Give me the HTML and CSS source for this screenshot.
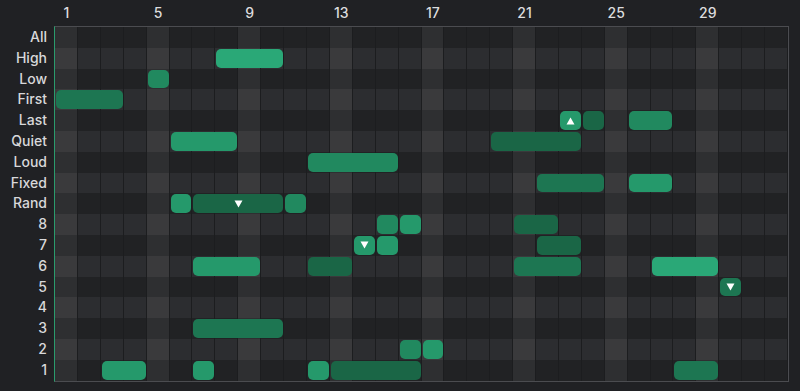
FILE: index.html
```html
<!DOCTYPE html>
<html lang="en">
<head>
    <title>Step Grid</title>
    <link rel="stylesheet" href="styles.css">
</head>
<body>
    <div class="editor">
        <div class="corner"></div>
        <div class="steps" id="steps"></div>
        <div class="lanes" id="lanes"></div>
        <div class="board">
            <div class="cells" id="cells"></div>
            <div class="notes" id="notes"></div>
        </div>
    </div>

    <script>
    const STEPS = 32;
    const lanes = ["All", "High", "Low", "First", "Last", "Quiet", "Loud", "Fixed", "Rand",
                   "8", "7", "6", "5", "4", "3", "2", "1"];

    // [row, first step, length, level 1-5, marker]
    const notes = [
        [1, 7, 3, 5],
        [2, 4, 1, 3],
        [3, 0, 3, 2],
        [4, 22, 1, 4, "up"], [4, 23, 1, 1], [4, 25, 2, 3],
        [5, 5, 3, 4], [5, 19, 4, 1],
        [6, 11, 4, 3],
        [7, 21, 3, 2], [7, 25, 2, 4],
        [8, 5, 1, 4], [8, 6, 4, 1, "down"], [8, 10, 1, 3],
        [9, 14, 1, 3], [9, 15, 1, 4], [9, 20, 2, 1],
        [10, 13, 1, 4, "down"], [10, 14, 1, 4], [10, 21, 2, 1],
        [11, 6, 3, 4], [11, 11, 2, 1], [11, 20, 3, 2], [11, 26, 3, 5],
        [12, 29, 1, 2, "down"],
        [14, 6, 4, 2],
        [15, 15, 1, 3], [15, 16, 1, 4],
        [16, 2, 2, 4], [16, 6, 1, 4], [16, 11, 1, 4], [16, 12, 4, 1], [16, 27, 2, 2]
    ];

    const markers = {
        up: '<svg width="9" height="8" viewBox="0 0 9 8"><path d="M4.5 0.5 L8.5 7.5 L0.5 7.5 Z" fill="#fff"/></svg>',
        down: '<svg width="9" height="8" viewBox="0 0 9 8"><path d="M0.5 0.5 L8.5 0.5 L4.5 7.5 Z" fill="#fff"/></svg>'
    };

    document.addEventListener("DOMContentLoaded", () => {
        const steps = document.getElementById("steps");
        for (let i = 0; i < STEPS; i++) {
            const s = document.createElement("span");
            s.className = "step";
            if (i % 4 === 0) s.textContent = i + 1;
            steps.appendChild(s);
        }

        const laneBox = document.getElementById("lanes");
        lanes.forEach(name => {
            const l = document.createElement("div");
            l.className = "lane";
            l.textContent = name;
            laneBox.appendChild(l);
        });

        const cells = document.getElementById("cells");
        for (let r = 0; r < lanes.length; r++) {
            for (let c = 0; c < STEPS; c++) {
                const cell = document.createElement("div");
                cell.className = "cell";
                if (r % 2 === 1) cell.classList.add("alt");
                if (c % 4 === 0) cell.classList.add("beat");
                cells.appendChild(cell);
            }
        }

        const board = document.getElementById("notes");
        notes.forEach(([row, col, len, level, marker]) => {
            const n = document.createElement("div");
            n.className = "note lvl-" + level;
            n.style.gridRow = row + 1;
            n.style.gridColumn = (col + 1) + " / span " + len;
            if (marker) n.innerHTML = markers[marker];
            board.appendChild(n);
        });
    });
    </script>
</body>
</html>
```

FILE: styles.css
```css
body { margin: 0; background: #202124; font-family: Inter, "Noto Sans", sans-serif; color: #d6d6d8; }
.editor {
    display: grid;
    grid-template-columns: 54px 735px;
    grid-template-rows: 26px auto;
}
.steps {
    display: grid;
    grid-template-columns: repeat(32, 1fr);
    width: 733px;
    margin-left: 1px;
    align-items: center;
}
.step { text-align: center; font-size: 14px; font-weight: 500; line-height: 22px; color: #dcdcde; }
.lanes {
    display: grid;
    grid-template-rows: repeat(17, 1fr);
    height: 353.6px;
    margin-top: 1px;
    padding-right: 7px;
}
.lane { text-align: right; font-size: 14px; font-weight: 500; line-height: 20.8px; color: #d8d8da; }
.board {
    position: relative;
    width: 733px;
    height: 353.6px;
    border: 1px solid #4b4c50;
    border-left-color: #2a9c6d;
}
.cells, .notes {
    display: grid;
    grid-template-columns: repeat(32, 1fr);
    grid-template-rows: repeat(17, 1fr);
    height: 100%;
}
.notes { position: absolute; inset: 0; }
.cell { background: #212224; box-shadow: inset -1px 0 0 #1c1d1f; }
.cell.alt { background: #2c2d30; }
.cell.beat { background: #2e2f31; }
.cell.alt.beat { background: #3a3a3c; }
.note {
    margin: 1px;
    border-radius: 5px;
    display: flex;
    align-items: center;
    justify-content: center;
}
.note svg { display: block; }
.lvl-1 { background: #1a6646; }
.lvl-2 { background: #1d7652; }
.lvl-3 { background: #21895f; }
.lvl-4 { background: #25996b; }
.lvl-5 { background: #2aa877; }
```
